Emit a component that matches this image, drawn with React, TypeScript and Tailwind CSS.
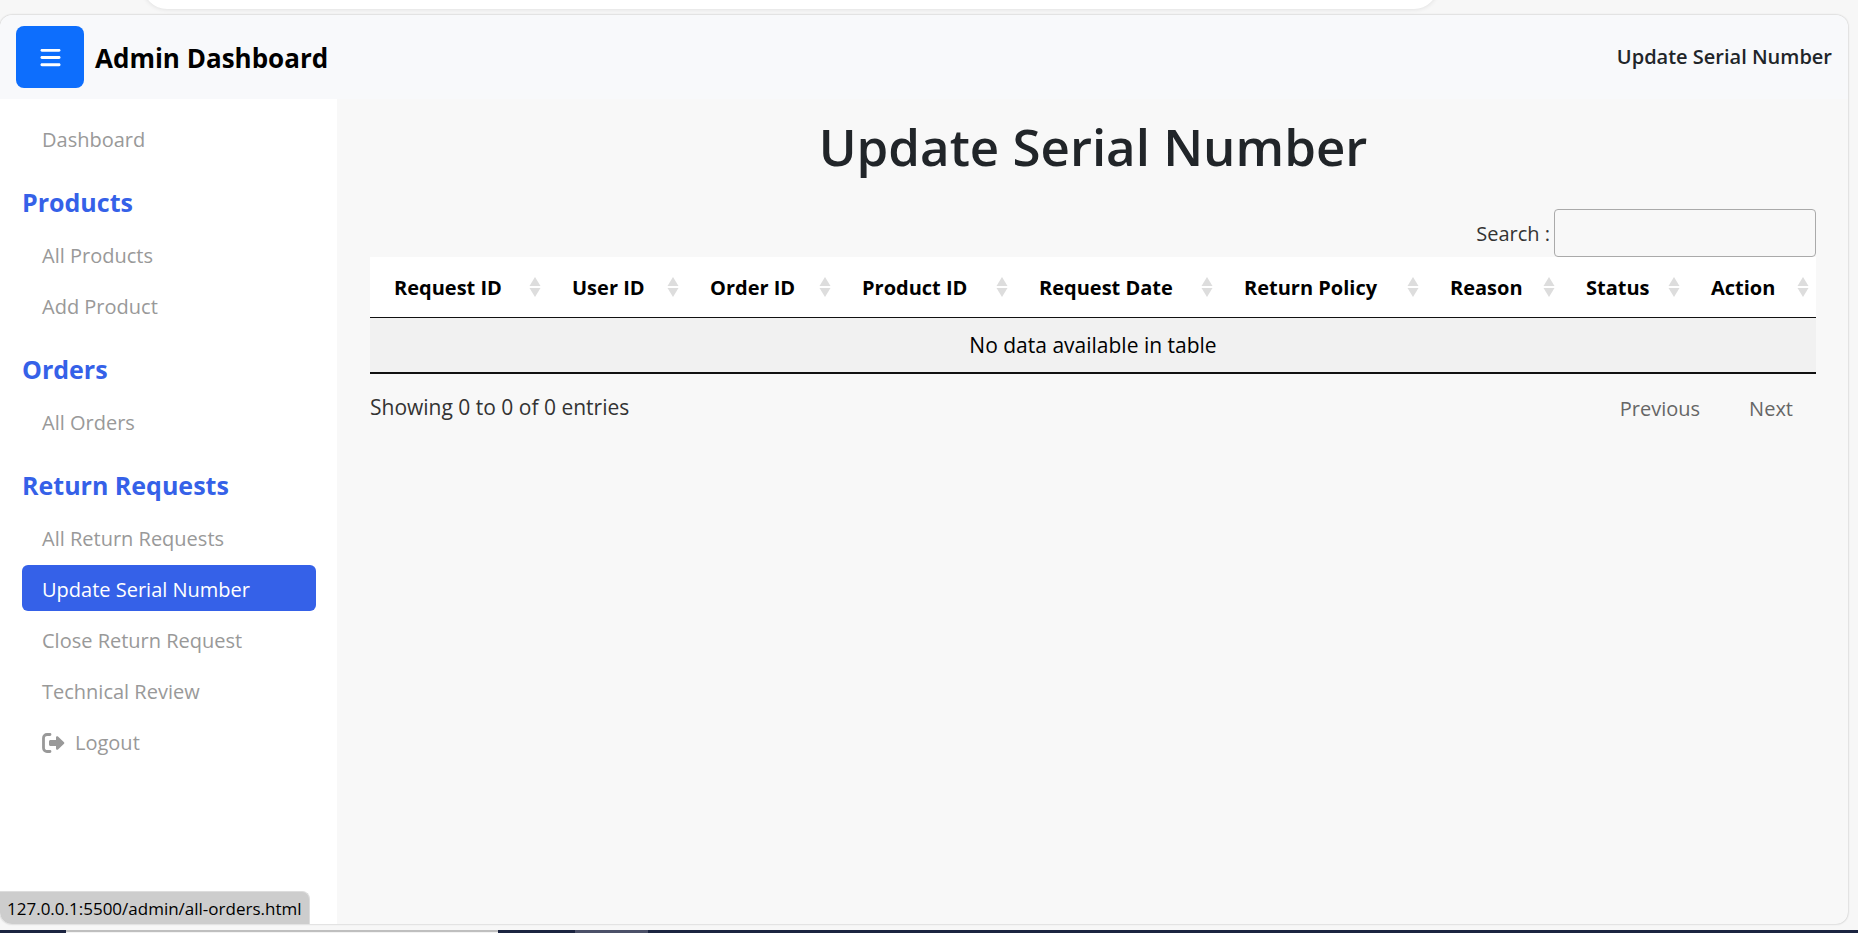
import React from "react";
import { FaBars } from "react-icons/fa6";

type NavEntry = { label: string; active?: boolean; icon?: boolean };
type NavGroup = { title?: string; items: NavEntry[] };

const groups: NavGroup[] = [
  { items: [{ label: "Dashboard" }] },
  { title: "Products", items: [{ label: "All Products" }, { label: "Add Product" }] },
  { title: "Orders", items: [{ label: "All Orders" }] },
  {
    title: "Return Requests",
    items: [
      { label: "All Return Requests" },
      { label: "Update Serial Number", active: true },
      { label: "Close Return Request" },
      { label: "Technical Review" },
      { label: "Logout", icon: true },
    ],
  },
];

const columns = [
  { label: "Request ID", width: "w-[178px]" },
  { label: "User ID", width: "w-[138px]" },
  { label: "Order ID", width: "w-[152px]" },
  { label: "Product ID", width: "w-[177px]" },
  { label: "Request Date", width: "w-[205px]" },
  { label: "Return Policy", width: "w-[206px]" },
  { label: "Reason", width: "w-[136px]" },
  { label: "Status", width: "w-[125px]" },
  { label: "Action", width: "w-[129px]" },
];

function LogoutIcon() {
  return (
    <svg viewBox="0 0 23 20" className="h-5 w-[23px] shrink-0" aria-hidden="true">
      <path d="M8 1.500H5A3.500 3.500 0 0 0 1.500 5v10A3.500 3.500 0 0 0 5 18.500h3" fill="none" stroke="currentColor" strokeWidth="2.8" strokeLinecap="round" />
      <path d="M8.500 7H14V4.400c0-1.100 1.200-1.600 2-.9l6 5.700c.5.500.5 1.100 0 1.600l-6 5.700c-.8.700-2 .2-2-.9V13H8.500C7.700 13 7 12.300 7 11.500v-3C7 7.700 7.700 7 8.500 7z" fill="currentColor" />
    </svg>
  );
}

function SortIcon() {
  return (
    <svg viewBox="0 0 12 20" className="h-5 w-3 shrink-0" fill="#dddddd" aria-hidden="true">
      <path d="M6 0l5.500 9h-11z" />
      <path d="M6 20l5.500-9h-11z" />
    </svg>
  );
}

function Sidebar() {
  return (
    <nav className="w-[337px] shrink-0 bg-white px-[22px] pt-4 text-[20px] text-[#999]">
      {groups.map((group, i) => (
        <section key={i}>
          {group.title && (
            <h2 className="pt-[21px] pb-3.5 text-[25px] leading-[30px] font-bold text-[#3561e8]">{group.title}</h2>
          )}
          <ul>
            {group.items.map((item) => (
              <li key={item.label} className="mb-[5px] w-[294px]">
                <a
                  href="#"
                  className={
                    item.active
                      ? "flex h-[46px] items-center rounded-md bg-[#3561e8] px-5 pt-1 text-white"
                      : "flex h-[46px] items-center gap-2.5 rounded-md px-5 pt-1"
                  }
                >
                  {item.icon && <LogoutIcon />}
                  {item.label}
                </a>
              </li>
            ))}
          </ul>
        </section>
      ))}
    </nav>
  );
}

export default function App() {
  return (
    <div className="flex min-h-screen flex-col overflow-hidden bg-[#f7f7f7] font-['Open_Sans','Noto_Sans',sans-serif]">
      <div className="h-[15px] overflow-hidden">
        <div className="-mt-[39px] mr-[420px] ml-[143px] h-12 rounded-full bg-white shadow-[0_0_5px_rgba(0,0,0,0.12)]" />
      </div>

      <div className="relative mr-2.5 flex grow flex-col overflow-hidden rounded-xl bg-[#f8f8f8] shadow-[0_0_2px_rgba(0,0,0,0.3)]">
        <header className="flex h-[84px] items-center gap-[11px] bg-[#f8f9fb] px-4">
          <button
            type="button"
            aria-label="Toggle menu"
            className="flex h-[62px] w-[68px] items-center justify-center rounded-lg bg-[#0d6efd] text-white"
          >
            <FaBars size={23} />
          </button>
          <span className="pt-0.5 text-[26px] font-bold text-black">Admin Dashboard</span>
          <span className="ml-auto text-[20px] font-semibold text-[#212529]">Update Serial Number</span>
        </header>

        <div className="flex grow">
          <Sidebar />
          <main className="min-w-0 grow pt-3.5 pr-8 pl-[33px] text-[20px] text-[#333]">
            <h1 className="text-center text-[51px] leading-[66px] font-semibold text-[#212529]">Update Serial Number</h1>

            <div className="mt-[30px] flex items-center justify-end gap-1">
              <label htmlFor="search" className="pt-0.5">Search :</label>
              <input id="search" type="search" className="h-12 w-[262px] rounded border border-[#aaa] bg-transparent px-2" />
            </div>

            <table className="w-full table-fixed border-collapse text-black">
              <thead className="bg-white">
                <tr className="border-b border-[#111]">
                  {columns.map((c) => (
                    <th key={c.label} scope="col" className={c.width + " h-[60px] pr-[7px] pl-6 text-left font-bold"}>
                      <div className="flex items-center justify-between whitespace-nowrap">
                        <span className="pt-0.5">{c.label}</span>
                        <SortIcon />
                      </div>
                    </th>
                  ))}
                </tr>
              </thead>
              <tbody>
                <tr className="border-b-2 border-[#111] bg-[#f1f1f1]">
                  <td colSpan={9} className="h-14 pt-0.5 text-center text-[21px]">
                    No data available in table
                  </td>
                </tr>
              </tbody>
            </table>

            <div className="mt-2.5 flex h-12 items-center justify-between">
              <div className="text-[21px]">Showing 0 to 0 of 0 entries</div>
              <div className="flex gap-[3px] pt-0.5 text-[#666]">
                <button type="button" className="px-[23px]">Previous</button>
                <button type="button" className="px-[23px]">Next</button>
              </div>
            </div>
          </main>
        </div>

        <div className="absolute bottom-0 left-0 flex h-[33px] w-[310px] items-center rounded-tr-lg border-t border-r border-[#ddd] bg-[#cdcdcd] pt-0.5 pl-[7px] text-[17px] text-black">
          127.0.0.1:5500/admin/all-orders.html
        </div>
      </div>

      <footer className="mt-1.5 flex h-[3px] bg-[#1b2440]">
        <div className="ml-[66px] w-[432px] border-t-2 border-[#bfbfbf] bg-[#f3f3f3]" />
        <div className="ml-[77px] w-[73px] bg-[#4b5068]" />
      </footer>
    </div>
  );
}
